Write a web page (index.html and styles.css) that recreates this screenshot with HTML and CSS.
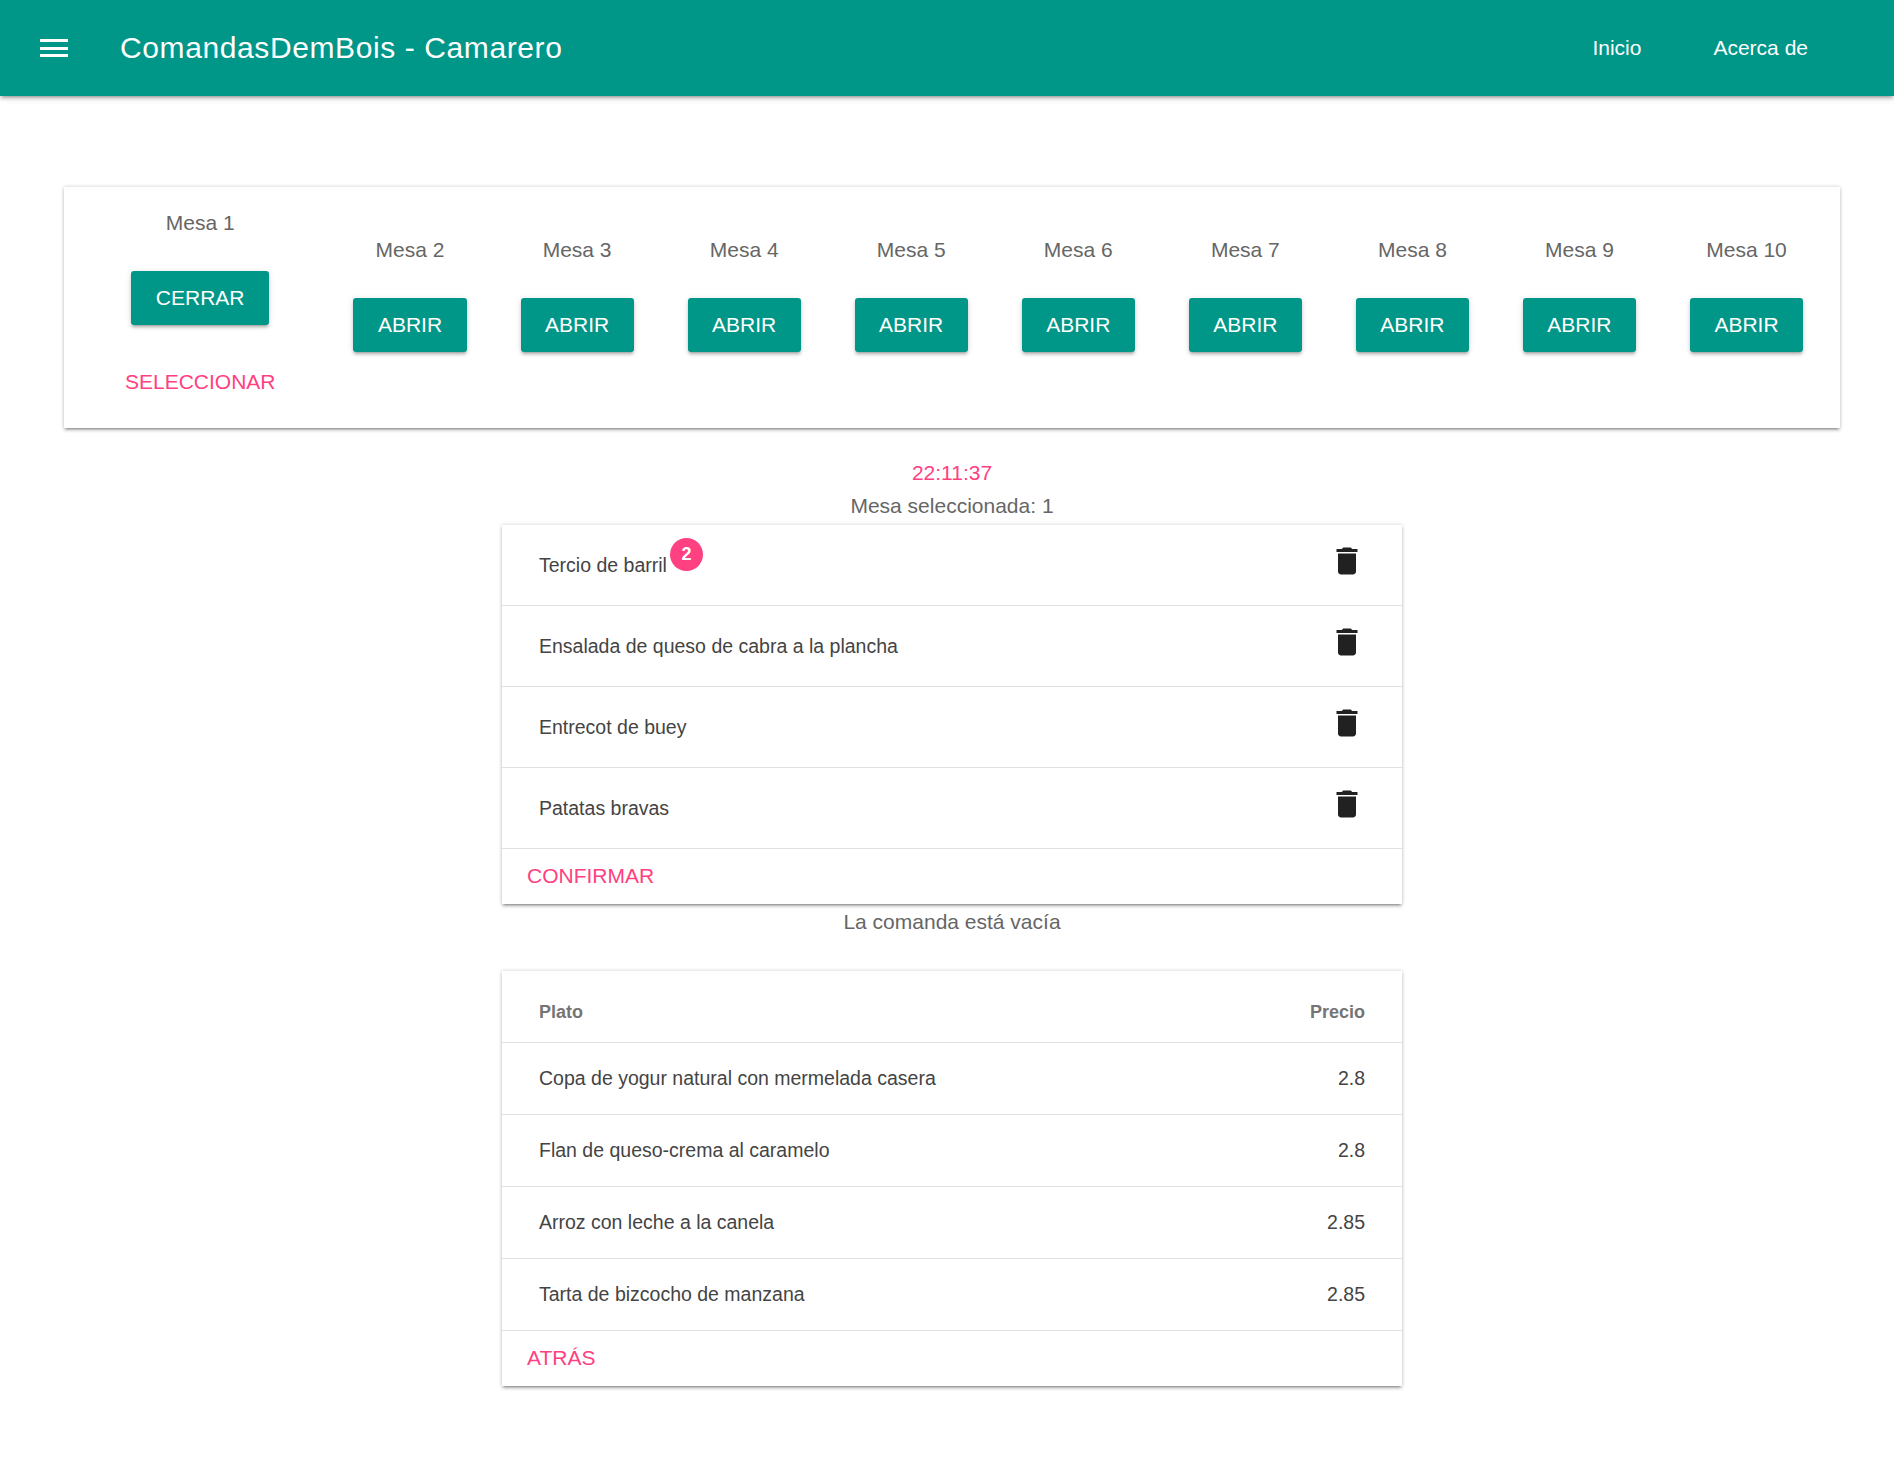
FILE: index.html
```html
<!DOCTYPE html>
<html lang="es">
<head>
    <meta charset="UTF-8">
    <title>ComandasDemBois - Camarero</title>
    <link rel="stylesheet" href="styles.css">
</head>
<body>
    <header class="topbar">
        <div class="menu-btn"><span></span><span></span><span></span></div>
        <div class="topbar-title">ComandasDemBois - Camarero</div>
        <nav class="topbar-nav">
            <a class="nav-link">Inicio</a>
            <a class="nav-link">Acerca de</a>
        </nav>
    </header>

    <main class="page">
        <section class="card mesas">
            <div class="mesa">
                <div class="mesa-label">Mesa 1</div>
                <button class="btn-raised">CERRAR</button>
                <button class="btn-flat">SELECCIONAR</button>
            </div>
            <div class="mesa"><div class="mesa-label">Mesa 2</div><button class="btn-raised">ABRIR</button></div>
            <div class="mesa"><div class="mesa-label">Mesa 3</div><button class="btn-raised">ABRIR</button></div>
            <div class="mesa"><div class="mesa-label">Mesa 4</div><button class="btn-raised">ABRIR</button></div>
            <div class="mesa"><div class="mesa-label">Mesa 5</div><button class="btn-raised">ABRIR</button></div>
            <div class="mesa"><div class="mesa-label">Mesa 6</div><button class="btn-raised">ABRIR</button></div>
            <div class="mesa"><div class="mesa-label">Mesa 7</div><button class="btn-raised">ABRIR</button></div>
            <div class="mesa"><div class="mesa-label">Mesa 8</div><button class="btn-raised">ABRIR</button></div>
            <div class="mesa"><div class="mesa-label">Mesa 9</div><button class="btn-raised">ABRIR</button></div>
            <div class="mesa"><div class="mesa-label">Mesa 10</div><button class="btn-raised">ABRIR</button></div>
        </section>

        <p class="line clock">22:11:37</p>
        <p class="line selected">Mesa seleccionada: 1</p>

        <section class="card panel comanda">
            <div class="comanda-row">
                <span class="plato">Tercio de barril<span class="badge">2</span></span>
                <svg class="icon-delete" viewBox="0 0 24 24"><path d="M6 19c0 1.1.9 2 2 2h8c1.1 0 2-.9 2-2V7H6v12zM19 4h-3.5l-1-1h-5l-1 1H5v2h14V4z"/></svg>
            </div>
            <div class="comanda-row">
                <span class="plato">Ensalada de queso de cabra a la plancha</span>
                <svg class="icon-delete" viewBox="0 0 24 24"><path d="M6 19c0 1.1.9 2 2 2h8c1.1 0 2-.9 2-2V7H6v12zM19 4h-3.5l-1-1h-5l-1 1H5v2h14V4z"/></svg>
            </div>
            <div class="comanda-row">
                <span class="plato">Entrecot de buey</span>
                <svg class="icon-delete" viewBox="0 0 24 24"><path d="M6 19c0 1.1.9 2 2 2h8c1.1 0 2-.9 2-2V7H6v12zM19 4h-3.5l-1-1h-5l-1 1H5v2h14V4z"/></svg>
            </div>
            <div class="comanda-row">
                <span class="plato">Patatas bravas</span>
                <svg class="icon-delete" viewBox="0 0 24 24"><path d="M6 19c0 1.1.9 2 2 2h8c1.1 0 2-.9 2-2V7H6v12zM19 4h-3.5l-1-1h-5l-1 1H5v2h14V4z"/></svg>
            </div>
            <div class="panel-actions comanda-actions"><button class="btn-flat">CONFIRMAR</button></div>
        </section>

        <p class="line empty-msg">La comanda está vacía</p>

        <section class="card panel carta">
            <table class="carta-table">
                <thead>
                    <tr><th class="col-plato">Plato</th><th class="col-precio">Precio</th></tr>
                </thead>
                <tbody>
                    <tr><td class="col-plato">Copa de yogur natural con mermelada casera</td><td class="col-precio">2.8</td></tr>
                    <tr><td class="col-plato">Flan de queso-crema al caramelo</td><td class="col-precio">2.8</td></tr>
                    <tr><td class="col-plato">Arroz con leche a la canela</td><td class="col-precio">2.85</td></tr>
                    <tr><td class="col-plato">Tarta de bizcocho de manzana</td><td class="col-precio">2.85</td></tr>
                </tbody>
            </table>
            <div class="panel-actions"><button class="btn-flat">ATRÁS</button></div>
        </section>
    </main>
</body>
</html>
```

FILE: styles.css
```css
body {
    margin: 0;
    font-family: "Liberation Sans", Arial, sans-serif;
    font-size: 21px;
    color: #666;
    background: #fff;
}

.topbar {
    display: flex;
    align-items: center;
    height: 96px;
    background-color: #009688;
    color: #fff;
    box-shadow: 0 3px 3px rgba(0,0,0,.14), 0 4px 2px -3px rgba(0,0,0,.2), 0 2px 7px rgba(0,0,0,.12);
}
.menu-btn {
    display: flex;
    flex-direction: column;
    gap: 4.5px;
    width: 28px;
    margin-left: 40px;
}
.menu-btn span {
    height: 3px;
    background: #fff;
}
.topbar-title {
    margin-left: 52px;
    font-size: 30px;
    letter-spacing: .6px;
}
.topbar-nav {
    display: flex;
    gap: 72px;
    margin-left: auto;
    margin-right: 86px;
}
.nav-link {
    color: #fff;
}

.page {
    padding: 91px 54px 40px 64px;
}
.card {
    background: #fff;
    box-shadow: 0 3px 2px -2px rgba(0,0,0,.3), 0 3px 3px rgba(0,0,0,.14), 0 0 4px rgba(0,0,0,.2);
}

.mesas {
    display: flex;
    justify-content: center;
    align-items: center;
    height: 241px;
}
.mesa {
    display: flex;
    flex: none;
    flex-direction: column;
    align-items: center;
    margin: 0 27px;
}
.mesa-label {
    height: 32px;
    line-height: 32px;
}
.mesa .btn-flat {
    padding-top: 2px;
}

button {
    font-family: inherit;
    font-size: 21px;
    border: none;
    background: none;
    cursor: pointer;
}
.btn-raised {
    height: 54px;
    margin: 32px 0 29px;
    padding: 0 24.45px;
    color: #fff;
    background-color: #009688;
    border-radius: 3px;
    box-shadow: 0 3px 2px -2px rgba(0,0,0,.2), 0 3px 3px rgba(0,0,0,.14), 0 1px 6px rgba(0,0,0,.12);
}
.btn-flat {
    height: 54px;
    padding: 0 24px;
    color: #ff4081;
}

.line {
    margin: 0;
    height: 32px;
    line-height: 32px;
    text-align: center;
}
.clock {
    margin-top: 29px;
    color: #ff4081;
}
.selected {
    line-height: 34px;
}

.panel {
    width: 900px;
    margin: 0 auto;
}
.comanda {
    margin-top: 4px;
}
.comanda-row {
    display: flex;
    align-items: center;
    justify-content: space-between;
    height: 80px;
    padding: 0 37px;
    border-bottom: 1px solid #e0e0e0;
    font-size: 19.5px;
    color: #444;
}
.plato {
    position: relative;
}
.badge {
    position: absolute;
    top: -16px;
    right: -36px;
    width: 33px;
    height: 33px;
    line-height: 33px;
    border-radius: 50%;
    background: #ff4081;
    color: #fff;
    font-size: 18px;
    font-weight: 700;
    text-align: center;
}
.icon-delete {
    width: 36px;
    height: 36px;
    margin-bottom: 8px;
    fill: #212121;
}

.panel-actions {
    height: 55px;
    padding-left: 1px;
    display: flex;
    align-items: center;
}
.comanda-actions {
    box-sizing: border-box;
    padding-bottom: 2px;
}

.empty-msg {
    margin-top: 2px;
}

.carta {
    margin-top: 33px;
}
.carta-table {
    width: 100%;
    border-collapse: collapse;
}
.carta-table th {
    height: 71px;
    padding: 12px 37px 0;
    box-sizing: border-box;
    font-size: 18px;
    font-weight: 700;
    color: #757575;
    border-bottom: 1px solid #e0e0e0;
}
.carta-table td {
    height: 71px;
    padding: 0 37px;
    font-size: 19.5px;
    color: #444;
    border-bottom: 1px solid #e0e0e0;
}
.col-plato {
    text-align: left;
}
.col-precio {
    text-align: right;
}
```
